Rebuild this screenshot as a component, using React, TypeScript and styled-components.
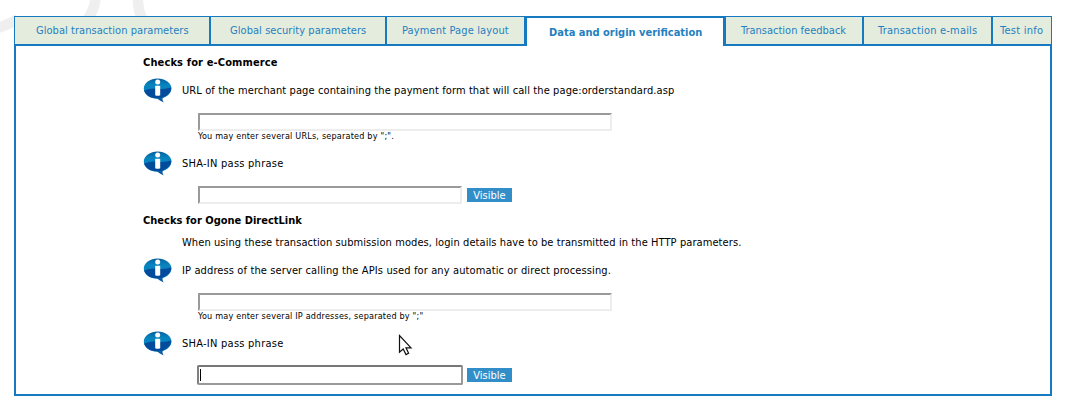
import React from 'react';
import styled, { createGlobalStyle } from 'styled-components';

const BLUE = '#167ac1';

const Global = createGlobalStyle`
  * { box-sizing: border-box; }
  body {
    margin: 0;
    background: #fff;
    color: #000;
    font: 11px/14px "DejaVu Sans Condensed", "DejaVu Sans", Verdana, sans-serif;
    font-stretch: condensed;
  }
`;

const Page = styled.div`
  position: relative;
  width: 1066px;
  height: 408px;
  overflow: hidden;
  padding: 16px 14px 12px;
`;

const Watermark = styled.svg`
  position: absolute;
  left: 0;
  top: 0;
`;

const Frame = styled.div`
  position: relative;
  height: 380px;
  background: #fff;
`;

const Tabs = styled.nav`
  display: flex;
  height: 30px;
`;

const Tab = styled.a<{ $w: number; $active?: boolean }>`
  width: ${p => p.$w}px;
  flex: none;
  display: flex;
  justify-content: center;
  white-space: nowrap;
  color: #247fc0;
  border: solid ${BLUE};
  border-width: ${p => (p.$active ? '2px 2px 0' : '1px 1px 2px')};
  background: ${p => (p.$active ? '#fff' : '#e4ecdd')};
  font-weight: ${p => (p.$active ? 'bold' : 'normal')};
  padding-top: ${p => (p.$active ? 8 : 7)}px;
`;

const Label = styled.span<{ $w: number; $s?: number }>`
  width: ${p => p.$w}px;
  letter-spacing: ${p => p.$s ?? 0}px;
`;

const Panel = styled.main`
  height: 350px;
  border: solid ${BLUE};
  border-width: 0 2px 2px;
  padding: 9px 0 0 127px;
`;

const Heading = styled.h2<{ $s?: number }>`
  margin: 0;
  padding-top: 1px;
  height: 23px;
  font-size: 11px;
  font-weight: bold;
  line-height: 14px;
  letter-spacing: ${p => p.$s ?? 0}px;
`;

const Row = styled.div<{ $h: number }>`
  display: flex;
  height: ${p => p.$h}px;
`;

const IconCell = styled.div`
  width: 39px;
  flex: none;
`;

const Text = styled.span<{ $s?: number }>`
  padding-top: 6px;
  white-space: nowrap;
  letter-spacing: ${p => p.$s ?? 0}px;
`;

const Note = styled.p`
  margin: 0;
  padding-left: 39px;
  height: 22px;
  white-space: nowrap;
  letter-spacing: 0.085px;
`;

const FieldRow = styled.div<{ $h: number }>`
  display: flex;
  align-items: flex-start;
  height: ${p => p.$h}px;
  padding-left: 55px;
`;

const Field = styled.div<{ $w: number }>`
  width: ${p => p.$w}px;
  height: 18px;
  border: 2px solid;
  border-color: #9a9a9a #ededed #ededed #9a9a9a;
`;

const FocusedField = styled.div`
  width: 266px;
  height: 20px;
  margin: -1px -1px 0;
  border: 2px solid #999;
  border-top-color: #777;
  border-left-color: #808080;
  border-radius: 2px;
  padding: 2px 0 0 1px;
`;

const Caret = styled.div`
  width: 1px;
  height: 12px;
  background: #000;
`;

const Button = styled.div`
  width: 45px;
  height: 14px;
  margin: 2px 0 0 5px;
  background: #328ec9;
  color: #fff;
  line-height: 15px;
  text-align: center;
`;

const Hint = styled.p<{ $h: number }>`
  margin: 0;
  padding-left: 55px;
  height: ${p => p.$h}px;
  font-size: 9px;
  line-height: 11px;
  white-space: nowrap;
  letter-spacing: 0.2px;
`;

const Pointer = styled.svg`
  position: absolute;
  left: 398px;
  top: 334px;
`;

const Bubble = styled.svg`
  display: block;
`;

function InfoIcon({ id }: { id: string }) {
  return (
    <Bubble width="30" height="26" viewBox="0 0 30 26">
      <defs>
        <linearGradient id={id} x1="0" y1="0" x2="0" y2="1">
          <stop offset="0" stopColor="#05609f" />
          <stop offset="0.3" stopColor="#0783bd" />
          <stop offset="1" stopColor="#078ac6" />
        </linearGradient>
      </defs>
      <path d="M12.5 19Q16 22.4 20.6 24.6Q19 22 19.6 19Z" fill="#0a56a1" />
      <ellipse cx="14.6" cy="10.6" rx="13.8" ry="10" fill={`url(#${id})`} />
      <path d="M1.1 12.6Q7 10 14.5 10.8T28.3 9.6C28.6 15 22.4 20.4 14.6 20.6C7.5 20.6 2 17 1.1 12.6Z" fill="#034c9b" />
      <circle cx="14.7" cy="4" r="2.5" fill="#fff" />
      <path d="M12.2 7.8h5v9.4q-2.5 1.2-5 0z" fill="#fff" />
    </Bubble>
  );
}

export default function App() {
  return (
    <>
      <Global />
      <Page>
        <Watermark width="300" height="40" fill="none" stroke="#efefef" strokeWidth="10.5">
          <path d="M-4 28.5Q8 25 18 19" />
          <path d="M95.5 -2Q95 9 87 20" />
          <path d="M138 -2Q137.5 9 142.5 20" />
        </Watermark>
        <Frame>
          <Tabs>
            <Tab $w={196}><Label $w={152} $s={0.05}>Global transaction parameters</Label></Tab>
            <Tab $w={176}><Label $w={136} $s={0.06}>Global security parameters</Label></Tab>
            <Tab $w={139}><Label $w={107} $s={0.13}>Payment Page layout</Label></Tab>
            <Tab $w={200} $active><Label $w={152}>Data and origin verification</Label></Tab>
            <Tab $w={138}><Label $w={106}>Transaction feedback</Label></Tab>
            <Tab $w={129}><Label $w={99} $s={0.2}>Transaction e-mails</Label></Tab>
            <Tab $w={60}><Label $w={44} $s={0.25}>Test info</Label></Tab>
          </Tabs>
          <Panel>
            <Heading $s={0.13}>Checks for e-Commerce</Heading>
            <Row $h={35}>
              <IconCell><InfoIcon id="g1" /></IconCell>
              <Text $s={0.105}>URL of the merchant page containing the payment form that will call the page:orderstandard.asp</Text>
            </Row>
            <FieldRow $h={18}><Field $w={414} /></FieldRow>
            <Hint $h={20}>You may enter several URLs, separated by ";".</Hint>
            <Row $h={35}>
              <IconCell><InfoIcon id="g2" /></IconCell>
              <Text $s={0.25}>SHA-IN pass phrase</Text>
            </Row>
            <FieldRow $h={27}><Field $w={264} /><Button>Visible</Button></FieldRow>
            <Heading>Checks for Ogone DirectLink</Heading>
            <Note>When using these transaction submission modes, login details have to be transmitted in the HTTP parameters.</Note>
            <Row $h={35}>
              <IconCell><InfoIcon id="g3" /></IconCell>
              <Text $s={0.12}>IP address of the server calling the APIs used for any automatic or direct processing.</Text>
            </Row>
            <FieldRow $h={18}><Field $w={414} /></FieldRow>
            <Hint $h={20}>You may enter several IP addresses, separated by ";"</Hint>
            <Row $h={35}>
              <IconCell><InfoIcon id="g4" /></IconCell>
              <Text $s={0.25}>SHA-IN pass phrase</Text>
            </Row>
            <FieldRow $h={20}>
              <FocusedField><Caret /></FocusedField>
              <Button>Visible</Button>
            </FieldRow>
          </Panel>
        </Frame>
        <Pointer width="16" height="24" viewBox="0 0 16 24">
          <path d="M1.5 1.5V18.2L5.2 15L8 20.6L10.6 19.3L8 13.8H13Z" fill="#fff" stroke="#111" strokeWidth="1.2" />
        </Pointer>
      </Page>
    </>
  );
}
